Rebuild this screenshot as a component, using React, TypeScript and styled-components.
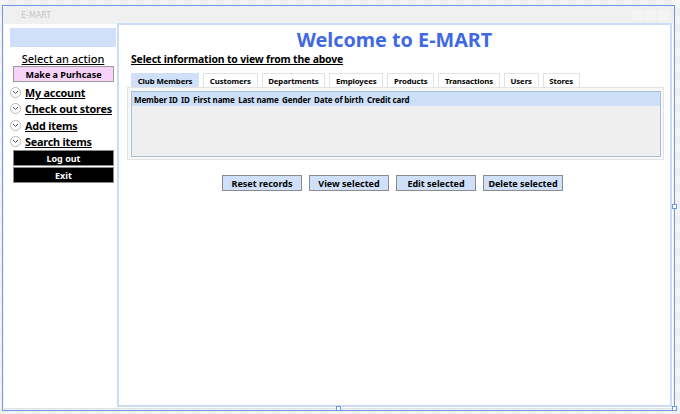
import React from "react";
import styled, { createGlobalStyle } from "styled-components";

const Global = createGlobalStyle`
  html, body { margin: 0; padding: 0; }
  body {
    width: 680px; height: 414px; overflow: hidden;
    font-family: "Noto Sans", "DejaVu Sans", sans-serif;
    background-color: #f5f5f5;
    background-image:
      linear-gradient(45deg, #efefef 25%, transparent 25%, transparent 75%, #efefef 75%),
      linear-gradient(45deg, #efefef 25%, transparent 25%, transparent 75%, #efefef 75%);
    background-size: 16px 16px;
    background-position: 0 0, 8px 8px;
  }
`;

const Canvas = styled.div`
  position: relative;
  width: 680px;
  height: 414px;
  padding: 5px 0 0 2px;
  box-sizing: border-box;
`;

const Selection = styled.div`
  position: relative;
  width: 673px;
  height: 406px;
  border: 1px solid #6f95e3;
  box-sizing: border-box;
  padding: 1px;
  display: flex;
  flex-direction: column;
`;

const Handle = styled.div<{ $x: number; $y: number }>`
  position: absolute;
  left: ${(p) => p.$x}px;
  top: ${(p) => p.$y}px;
  width: 5px;
  height: 5px;
  border: 1px solid #6f95e3;
  background: #fff;
  box-sizing: border-box;
`;

const TitleBar = styled.div`
  height: 17px;
  background: #f0f0f0;
  display: flex;
  align-items: center;
  justify-content: space-between;
  padding: 0 0 0 17px;
  font-size: 8px;
  color: #c4c4c4;
  font-family: "DejaVu Sans", sans-serif;
`;

const WinButtons = styled.div`
  display: flex;
  gap: 2px;
  padding-right: 4px;
`;

const WinButton = styled.div`
  width: 11px;
  height: 11px;
  background: #f4f4f4;
`;

const Body = styled.div`
  flex: 1;
  display: flex;
  background: #fff;
  border-bottom: 1px solid #e2e2e2;
`;

const Sidebar = styled.div`
  width: 113px;
  padding: 4px 0 0 6px;
  box-sizing: border-box;
  display: flex;
  flex-direction: column;
  align-items: stretch;
`;

const Banner = styled.div`
  height: 19px;
  width: 106px;
  background: #cfe0f8;
`;

const SideHeading = styled.div`
  margin-top: 5px;
  font-size: 11px;
  line-height: 13px;
  font-weight: 500;
  text-decoration: underline;
  color: #000;
  text-align: center;
  width: 106px;
`;

const PinkButton = styled.div`
  margin: 1px 0 0 3px;
  width: 101px;
  height: 16px;
  box-sizing: border-box;
  background: #f7d2f9;
  border: 1px solid #9a9a9a;
  font-size: 9px;
  font-weight: 700;
  display: flex;
  align-items: center;
  justify-content: center;
`;

const MenuGap = styled.div`
  height: 2px;
`;

const MenuItem = styled.div`
  display: flex;
  align-items: center;
  gap: 4px;
  height: 16.5px;
  font-size: 10.8px;
  font-weight: 700;
  text-decoration: underline;
  color: #000;
  letter-spacing: -0.2px;
`;

const Chevron = styled.span`
  width: 11px;
  height: 11px;
  border-radius: 50%;
  border: 1px solid #b9b9b9;
  box-sizing: border-box;
  display: inline-flex;
  align-items: center;
  justify-content: center;
  flex-shrink: 0;
`;

const BlackButton = styled.div`
  margin: 0 0 1px 3px;
  width: 101px;
  height: 16px;
  box-sizing: border-box;
  background: #000;
  border: 1px solid #8a8a8a;
  color: #fff;
  font-size: 9px;
  font-weight: 700;
  display: flex;
  align-items: center;
  justify-content: center;
`;

const Main = styled.div`
  flex: 1;
  margin: -1px 1px 1px 0;
  border: 2px solid #cddcf5;
  background: #fff;
  display: flex;
  flex-direction: column;
  padding: 0 0 0 12px;
`;

const Title = styled.h1`
  margin: 2px 0 0 -12px;
  font-size: 19.8px;
  line-height: 26px;
  font-weight: 700;
  color: #4169e1;
  text-align: center;
`;

const Subtitle = styled.div`
  margin-top: -1px;
  font-size: 10.4px;
  line-height: 15px;
  font-weight: 700;
  text-decoration: underline;
  letter-spacing: -0.15px;
`;

const TabStrip = styled.div`
  margin-top: 6px;
  display: flex;
  gap: 4px;
  height: 14px;
  align-items: flex-end;
`;

const Tab = styled.div<{ $active?: boolean }>`
  height: 14px;
  padding: 0 5.7px;
  box-sizing: border-box;
  border: 1px solid ${(p) => (p.$active ? "#cfe0f8" : "#e2e2e2")};
  border-bottom: none;
  background: ${(p) => (p.$active ? "#cfe0f8" : "#fff")};
  font-size: 7.8px;
  font-weight: 700;
  display: flex;
  align-items: center;
  letter-spacing: -0.1px;
`;

const TabPanel = styled.div`
  margin-left: -4px;
  width: 537px;
  height: 73px;
  box-sizing: border-box;
  border: 1px solid #e4e4e4;
  background: #f8f8f8;
  padding: 3px 2px 2px 3px;
`;

const Grid = styled.div`
  height: 100%;
  box-sizing: border-box;
  border: 1px solid #a9bfd8;
  background: #efefef;
`;

const GridHeader = styled.div`
  height: 14px;
  background: #cde0f7;
  display: flex;
  align-items: center;
  gap: 3.4px;
  padding-left: 2px;
  font-size: 8px;
  font-weight: 700;
  letter-spacing: -0.1px;
`;

const ButtonRow = styled.div`
  margin: 15px 0 0 0;
  display: flex;
  gap: 7px;
  padding-left: 91px;
`;

const ActionButton = styled.div`
  width: 80px;
  height: 16px;
  box-sizing: border-box;
  background: #cfe0f8;
  border: 1px solid #8c8c8c;
  font-size: 9px;
  font-weight: 700;
  display: flex;
  align-items: center;
  justify-content: center;
`;

const ChevronIcon = () => (
  <svg width="7" height="5" viewBox="0 0 7 5">
    <path d="M1 1 L3.5 3.5 L6 1" fill="none" stroke="#555" strokeWidth="1" />
  </svg>
);

const tabs = ["Club Members", "Customers", "Departments", "Employees", "Products", "Transactions", "Users", "Stores"];
const columns = ["Member ID", "ID", "First name", "Last name", "Gender", "Date of birth", "Credit card"];
const menu = ["My account", "Check out stores", "Add items", "Search items"];
const actions = ["Reset records", "View selected", "Edit selected", "Delete selected"];

export default function App() {
  return (
    <>
      <Global />
      <Canvas>
        <Selection>
          <TitleBar>
            <span>E-MART</span>
            <WinButtons>
              <WinButton />
              <WinButton />
              <WinButton />
            </WinButtons>
          </TitleBar>
          <Body>
            <Sidebar>
              <Banner />
              <SideHeading>Select an action</SideHeading>
              <PinkButton>Make a Purhcase</PinkButton>
              <MenuGap />
              {menu.map((m) => (
                <MenuItem key={m}>
                  <Chevron>
                    <ChevronIcon />
                  </Chevron>
                  {m}
                </MenuItem>
              ))}
              <BlackButton>Log out</BlackButton>
              <BlackButton>Exit</BlackButton>
            </Sidebar>
            <Main>
              <Title>Welcome to E-MART</Title>
              <Subtitle>Select information to view from the above</Subtitle>
              <TabStrip>
                {tabs.map((t, i) => (
                  <Tab key={t} $active={i === 0}>
                    {t}
                  </Tab>
                ))}
              </TabStrip>
              <TabPanel>
                <Grid>
                  <GridHeader>
                    {columns.map((c) => (
                      <span key={c}>{c}</span>
                    ))}
                  </GridHeader>
                </Grid>
              </TabPanel>
              <ButtonRow>
                {actions.map((a) => (
                  <ActionButton key={a}>{a}</ActionButton>
                ))}
              </ButtonRow>
            </Main>
          </Body>
          <Handle $x={333} $y={400} />
          <Handle $x={669} $y={198} />
          <Handle $x={669} $y={400} />
        </Selection>
      </Canvas>
    </>
  );
}
